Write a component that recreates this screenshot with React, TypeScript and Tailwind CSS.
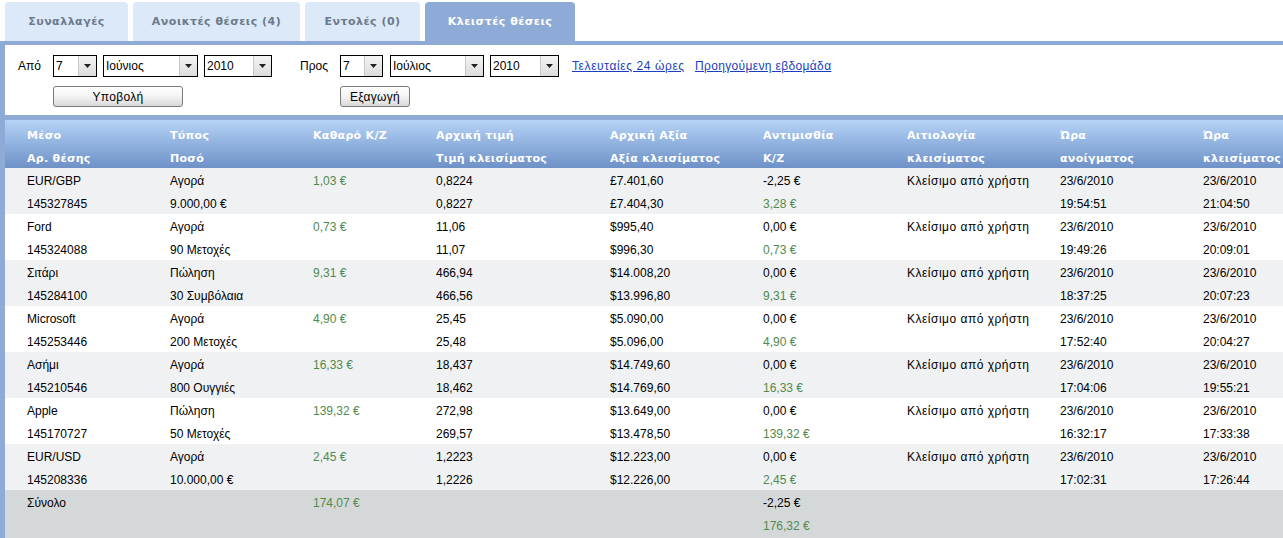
import React from "react";

const tabs = [
  { label: "Συναλλαγές", w: "w-[123px]", active: false },
  { label: "Ανοικτές θέσεις (4)", w: "w-[167px]", active: false },
  { label: "Εντολές (0)", w: "w-[115px]", active: false },
  { label: "Κλειστές θέσεις", w: "w-[150px]", active: true },
];

type Row = {
  a: [string, string];
  b: [string, string];
  pl: string;
  c: [string, string];
  d: [string, string];
  e: [string, string];
  reason: string;
  open: [string, string];
  close: [string, string];
};

const rows: Row[] = [
  { a: ["EUR/GBP", "145327845"], b: ["Αγορά", "9.000,00 €"], pl: "1,03 €", c: ["0,8224", "0,8227"], d: ["£7.401,60", "£7.404,30"], e: ["-2,25 €", "3,28 €"], reason: "Κλείσιμο από χρήστη", open: ["23/6/2010", "19:54:51"], close: ["23/6/2010", "21:04:50"] },
  { a: ["Ford", "145324088"], b: ["Αγορά", "90 Μετοχές"], pl: "0,73 €", c: ["11,06", "11,07"], d: ["$995,40", "$996,30"], e: ["0,00 €", "0,73 €"], reason: "Κλείσιμο από χρήστη", open: ["23/6/2010", "19:49:26"], close: ["23/6/2010", "20:09:01"] },
  { a: ["Σιτάρι", "145284100"], b: ["Πώληση", "30 Συμβόλαια"], pl: "9,31 €", c: ["466,94", "466,56"], d: ["$14.008,20", "$13.996,80"], e: ["0,00 €", "9,31 €"], reason: "Κλείσιμο από χρήστη", open: ["23/6/2010", "18:37:25"], close: ["23/6/2010", "20:07:23"] },
  { a: ["Microsoft", "145253446"], b: ["Αγορά", "200 Μετοχές"], pl: "4,90 €", c: ["25,45", "25,48"], d: ["$5.090,00", "$5.096,00"], e: ["0,00 €", "4,90 €"], reason: "Κλείσιμο από χρήστη", open: ["23/6/2010", "17:52:40"], close: ["23/6/2010", "20:04:27"] },
  { a: ["Ασήμι", "145210546"], b: ["Αγορά", "800 Ουγγιές"], pl: "16,33 €", c: ["18,437", "18,462"], d: ["$14.749,60", "$14.769,60"], e: ["0,00 €", "16,33 €"], reason: "Κλείσιμο από χρήστη", open: ["23/6/2010", "17:04:06"], close: ["23/6/2010", "19:55:21"] },
  { a: ["Apple", "145170727"], b: ["Πώληση", "50 Μετοχές"], pl: "139,32 €", c: ["272,98", "269,57"], d: ["$13.649,00", "$13.478,50"], e: ["0,00 €", "139,32 €"], reason: "Κλείσιμο από χρήστη", open: ["23/6/2010", "16:32:17"], close: ["23/6/2010", "17:33:38"] },
  { a: ["EUR/USD", "145208336"], b: ["Αγορά", "10.000,00 €"], pl: "2,45 €", c: ["1,2223", "1,2226"], d: ["$12.223,00", "$12.226,00"], e: ["0,00 €", "2,45 €"], reason: "Κλείσιμο από χρήστη", open: ["23/6/2010", "17:02:31"], close: ["23/6/2010", "17:26:44"] },
];

const grid =
  "grid grid-cols-[143px_143px_123px_174px_153px_144px_153px_143px_1fr] pl-[22px]";

function Select({ value, w }: { value: string; w: string }) {
  return (
    <div className={`${w} h-[22px] border border-black bg-white flex items-stretch`}>
      <div className="flex-1 pl-[2px] leading-[20px] text-black">{value}</div>
      <div className="w-[18px] border-l border-[#c8c8c8] bg-gradient-to-b from-[#f4f4f4] to-[#dcdcdc] flex items-center justify-center">
        <svg width="7" height="4" viewBox="0 0 7 4">
          <path d="M0 0h7L3.5 4z" fill="#222" />
        </svg>
      </div>
    </div>
  );
}

function Btn({ label, w }: { label: string; w: string }) {
  return (
    <div
      className={`${w} h-[21px] rounded-[3px] border border-[#7a7a7a] bg-gradient-to-b from-[#ffffff] via-[#f3f3f3] to-[#d9d9d9] flex items-center justify-center text-[12px] tracking-[0.3px] text-black`}
    >
      {label}
    </div>
  );
}

function Cell({
  top,
  bottom,
  topGreen,
  bottomGreen,
  wide,
}: {
  top?: string;
  bottom?: string;
  topGreen?: boolean;
  bottomGreen?: boolean;
  wide?: boolean;
}) {
  const t = wide ? "tracking-[0.5px]" : "";
  return (
    <div className="flex flex-col">
      <div className={`h-[23px] leading-[27px] whitespace-nowrap ${t} ${topGreen ? "text-[#4f8a4f]" : "text-black"}`}>{top ?? ""}</div>
      <div className={`h-[23px] leading-[27px] whitespace-nowrap ${t} ${bottomGreen ? "text-[#4f8a4f]" : "text-black"}`}>{bottom ?? ""}</div>
    </div>
  );
}

function HCell({ top, bottom }: { top?: string; bottom?: string }) {
  return (
    <div className="flex flex-col">
      <div className="h-[23px] leading-[27px] whitespace-nowrap">{top ?? ""}</div>
      <div className="h-[23px] leading-[27px] whitespace-nowrap">{bottom ?? ""}</div>
    </div>
  );
}

export default function App() {
  return (
    <div className="w-[1283px] h-[538px] overflow-hidden bg-white font-['Liberation_Sans',Arial,sans-serif] text-[12px]">
      {/* Tabs */}
      <div className="h-[41px] pt-[2px] pl-[5px] flex gap-[5px]">
        {tabs.map((t) => (
          <div
            key={t.label}
            className={`${t.w} h-[39px] pt-[1px] rounded-t-[4px] flex items-center justify-center font-['DejaVu_Sans',sans-serif] font-bold text-[11px] tracking-[0.5px] ${
              t.active ? "bg-[#8eaad6] text-white" : "bg-[#dce9f8] text-[#6b7a8c]"
            }`}
          >
            {t.label}
          </div>
        ))}
      </div>
      <div className="h-[4px] bg-[#8eaad6]" />

      {/* Filter panel */}
      <div className="h-[70px] border-l-[5px] border-[#8eaad6] bg-white pt-[10px] pl-[13px]">
        <div className="flex items-center h-[22px]">
          <span className="w-[35px] text-black">Από</span>
          <Select value="7" w="w-[44px]" />
          <div className="w-[6px]" />
          <Select value="Ιούνιος" w="w-[95px]" />
          <div className="w-[6px]" />
          <Select value="2010" w="w-[68px]" />
          <span className="ml-[28px] w-[40px] text-black">Προς</span>
          <Select value="7" w="w-[43px]" />
          <div className="w-[7px]" />
          <Select value="Ιούλιος" w="w-[94px]" />
          <div className="w-[6px]" />
          <Select value="2010" w="w-[69px]" />
          <a className="ml-[13px] w-[123px] whitespace-nowrap tracking-[0.6px] text-[#1a3ec0] underline">Τελευταίες 24 ώρες</a>
          <a className="whitespace-nowrap tracking-[0.35px] text-[#1a3ec0] underline">Προηγούμενη εβδομάδα</a>
        </div>
        <div className="flex mt-[9px]">
          <div className="ml-[35px]">
            <Btn label="Υποβολή" w="w-[130px]" />
          </div>
          <div className="ml-[157px]">
            <Btn label="Εξαγωγή" w="w-[70px]" />
          </div>
        </div>
      </div>
      <div className="h-[5px] bg-[#8eaad6]" />

      {/* Table */}
      <div className="border-l-[5px] border-[#8eaad6]">
        <div className={`${grid} h-[48px] pt-[2px] bg-gradient-to-b from-[#b6d3f7] to-[#6e91c7] text-white font-['DejaVu_Sans',sans-serif] font-bold text-[11px] tracking-[0.3px]`}>
          <HCell top="Μέσο" bottom="Αρ. θέσης" />
          <HCell top="Τύπος" bottom="Ποσό" />
          <HCell top="Καθαρό Κ/Ζ" />
          <HCell top="Αρχική τιμή" bottom="Τιμή κλεισίματος" />
          <HCell top="Αρχική Αξία" bottom="Αξία κλεισίματος" />
          <HCell top="Αντιμισθία" bottom="Κ/Ζ" />
          <HCell top="Αιτιολογία" bottom="κλεισίματος" />
          <HCell top="Ώρα" bottom="ανοίγματος" />
          <HCell top="Ώρα" bottom="κλεισίματος" />
        </div>
        {rows.map((r, i) => (
          <div key={r.a[1]} className={`${grid} ${i % 2 === 0 ? "bg-[#eff1f3]" : "bg-white"}`}>
            <Cell top={r.a[0]} bottom={r.a[1]} />
            <Cell top={r.b[0]} bottom={r.b[1]} />
            <Cell top={r.pl} topGreen />
            <Cell top={r.c[0]} bottom={r.c[1]} />
            <Cell top={r.d[0]} bottom={r.d[1]} />
            <Cell top={r.e[0]} bottom={r.e[1]} bottomGreen />
            <Cell top={r.reason} wide />
            <Cell top={r.open[0]} bottom={r.open[1]} />
            <Cell top={r.close[0]} bottom={r.close[1]} />
          </div>
        ))}
        <div className={`${grid} bg-[#d5d8d8] h-[48px]`}>
          <Cell top="Σύνολο" />
          <Cell />
          <Cell top="174,07 €" topGreen />
          <Cell />
          <Cell />
          <Cell top="-2,25 €" bottom="176,32 €" bottomGreen />
          <Cell />
          <Cell />
          <Cell />
        </div>
      </div>
    </div>
  );
}
